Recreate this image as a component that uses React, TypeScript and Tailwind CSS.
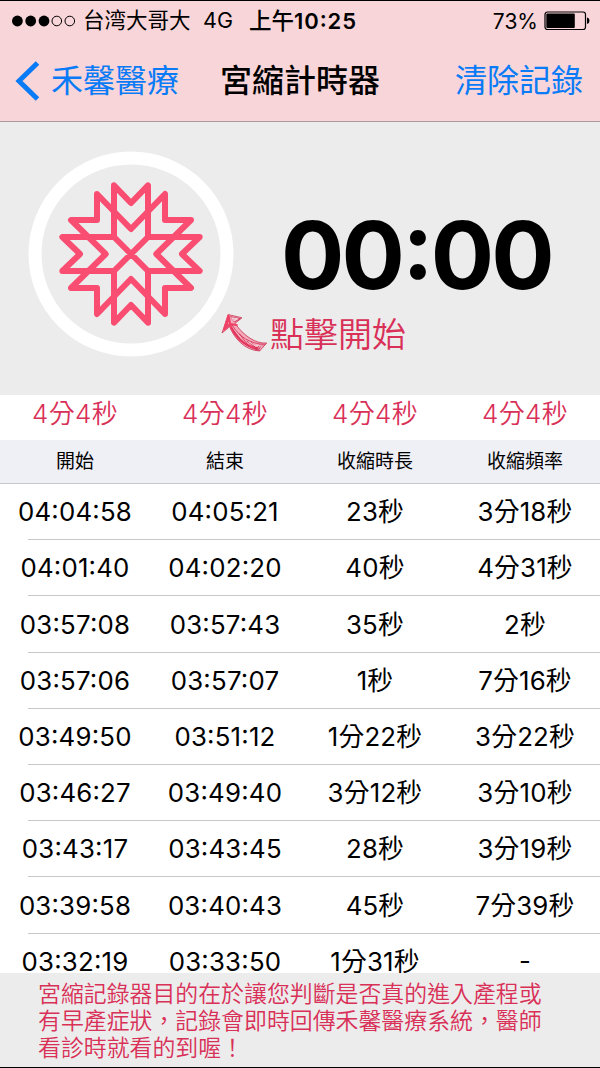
const records = [
  ['04:04:58', '04:05:21', '23秒', '3分18秒'],
  ['04:01:40', '04:02:20', '40秒', '4分31秒'],
  ['03:57:08', '03:57:43', '35秒', '2秒'],
  ['03:57:06', '03:57:07', '1秒', '7分16秒'],
  ['03:49:50', '03:51:12', '1分22秒', '3分22秒'],
  ['03:46:27', '03:49:40', '3分12秒', '3分10秒'],
  ['03:43:17', '03:43:45', '28秒', '3分19秒'],
  ['03:39:58', '03:40:43', '45秒', '7分39秒'],
  ['03:32:19', '03:33:50', '1分31秒', '-'],
];

const averages = ['4分4秒', '4分4秒', '4分4秒', '4分4秒'];
const columns = ['開始', '結束', '收縮時長', '收縮頻率'];
const notice = [
  '宮縮記錄器目的在於讓您判斷是否真的進入產程或',
  '有早產症狀，記錄會即時回傳禾馨醫療系統，醫師',
  '看診時就看的到喔！',
];

function StatusBar() {
  return (
    <div className="flex h-[40px] items-center pl-[12px] pr-[10px] text-[22px] leading-none whitespace-nowrap">
      <svg width="64" height="12" viewBox="0 0 64 12" className="shrink-0">
        <circle cx="5.4" cy="6" r="5.4" />
        <circle cx="18.7" cy="6" r="5.4" />
        <circle cx="32" cy="6" r="5.4" />
        <circle cx="44.8" cy="6" r="4.8" fill="none" stroke="#000" />
        <circle cx="57.8" cy="6" r="4.8" fill="none" stroke="#000" />
      </svg>
      <span className="ml-[7px] w-[120px] text-[21.5px]">台湾大哥大</span>
      <span className="w-[46px] text-[21.5px]">4G</span>
      <span className="text-[22.5px] font-medium">上午<span className="text-[22px] font-semibold tracking-[0.9px]">10:25</span></span>
      <span className="ml-auto text-[21px]">73%</span>
      <svg width="46" height="20" viewBox="0 0 46 20" className="ml-[6px] shrink-0">
        <rect x="1" y="1" width="40.5" height="17.5" rx="2.5" fill="none" stroke="#000" strokeWidth="1.2" />
        <rect x="2.3" y="2.5" width="28.5" height="14.5" rx="1" />
        <path d="M43 6.5q2.5.6 2.5 3.3t-2.5 3.3z" />
      </svg>
    </div>
  );
}

function NavBar() {
  return (
    <div className="grid h-[80px] grid-cols-[200px_200px_200px] items-center text-[32px] leading-none whitespace-nowrap">
      <button className="flex items-center pl-[15px] text-left text-[#0a7bf7]">
        <svg width="25" height="40" viewBox="0 0 25 40" className="shrink-0">
          <path d="M22.5 2 4 20 22.5 38" fill="none" stroke="currentColor" strokeWidth="5" />
        </svg>
        <span className="ml-[11px]">禾馨醫療</span>
      </button>
      <h1 className="text-center font-medium">宮縮計時器</h1>
      <button className="pr-[17px] text-right text-[#0a7bf7]">清除記錄</button>
    </div>
  );
}

function Snowflake() {
  return (
    <svg width="206" height="206" viewBox="-309 -309 618 618">
      <circle r="288" fill="none" stroke="#fff" strokeWidth="39" />
      <g fill="none" stroke="#fa4d72" strokeWidth="18" strokeLinejoin="round" strokeLinecap="round">
        <path d="M0 0-51-51V-206L0-153 51-206V-51ZM0 0 51-51H206L153 0 206 51H51ZM0 0 51 51V206L0 153-51 206V51ZM0 0-51 51H-206L-153 0-206-51H-51Z" />
        <path d="M-102-180 0-75 102-180V-102H180L76 0 180 102H102V180L0 75-102 180V102H-180L-76 0-180-102H-102Z" />
      </g>
    </svg>
  );
}

function SketchArrow() {
  return (
    <svg width="46" height="38" viewBox="0 0 138 114" fill="none" strokeLinejoin="round" strokeLinecap="round">
      <path d="M22 3 3 57 26 38C38 70 70 109 116 111L137 87C105 90 68 66 42 28L62 12Z" fill="#f5a9b9" stroke="#c92f52" strokeWidth="2.4" />
      <path d="M22 4 9 47 27 30 47 33M23 6 16 40M23 6 28 34" stroke="#ef4065" strokeWidth="6" />
      <path d="M27 32C42 70 72 95 108 103" stroke="#ef4065" strokeWidth="7" />
      <path d="M34 34C54 68 86 90 132 91M34 44C54 82 84 104 116 109M40 52 62 82M56 60 84 98" stroke="#cf2f57" strokeWidth="2.4" />
      <path d="M78 82 114 106 122 92 128 97M92 86 106 108 116 92M28 8 58 14 40 24 32 14" stroke="#cf2f57" strokeWidth="2.4" />
      <path d="M34 12 50 14 38 20ZM84 84 104 97M106 94 124 96" stroke="#ececec" strokeWidth="2" />
    </svg>
  );
}

export default function App() {
  return (
    <div className="flex h-[1068px] w-[600px] flex-col overflow-hidden border-y-[1px] border-black bg-white font-['Inter','Noto_Sans_CJK_TC',sans-serif] text-black [font-feature-settings:'case']">
      <header className="h-[121px] shrink-0 border-b border-[#a9979f] bg-[#f8d5d8]">
        <StatusBar />
        <NavBar />
      </header>

      <section className="flex h-[273px] shrink-0 bg-[#ececec]">
        <button className="ml-[28px] mt-[29px] h-[206px] w-[206px] shrink-0">
          <Snowflake />
        </button>
        <div className="flex flex-col pt-[85px]">
          <div className="ml-[47px] flex h-[96px] items-center text-[94px] leading-none font-bold tracking-[-2.8px] whitespace-nowrap">00:00</div>
          <div className="-ml-[13px] mt-[11px] flex items-start">
            <SketchArrow />
            <span className="ml-[3px] mt-[4px] text-[34px] leading-[34px] font-[350] text-[#d93058]">點擊開始</span>
          </div>
        </div>
      </section>

      <div className="grid h-[45px] shrink-0 grid-cols-4 text-center text-[26px] leading-[38px] tracking-[0.3px] text-[#d93058]">
        {averages.map((value, i) => (
          <span key={i} className="font-[350]">{value}</span>
        ))}
      </div>
      <div className="grid h-[44px] shrink-0 grid-cols-4 items-center border-b border-[#c8c7cc] bg-[#efeff6] text-center text-[19px] leading-none">
        {columns.map((label) => (
          <span key={label}>{label}</span>
        ))}
      </div>

      <main className="min-h-0 flex-1 overflow-hidden">
        {records.map((row) => (
          <div key={row[0]} className="flex h-[56.2px] flex-col">
            <div className="grid flex-1 grid-cols-4 items-center pt-px text-center text-[25.8px] leading-none tracking-[0.2px] whitespace-nowrap">
              {row.map((cell, i) => (
                <span key={i}>{cell}</span>
              ))}
            </div>
            <div className="ml-[28px] h-px shrink-0 bg-[#c8c7cc]" />
          </div>
        ))}
      </main>

      <footer className="h-[94px] shrink-0 bg-[#ececec] pl-[38px] pt-[8px] text-[22.9px] leading-[26.8px] font-[350] whitespace-nowrap text-[#d93058]">
        {notice.map((line) => (
          <p key={line}>{line}</p>
        ))}
      </footer>
    </div>
  );
}
